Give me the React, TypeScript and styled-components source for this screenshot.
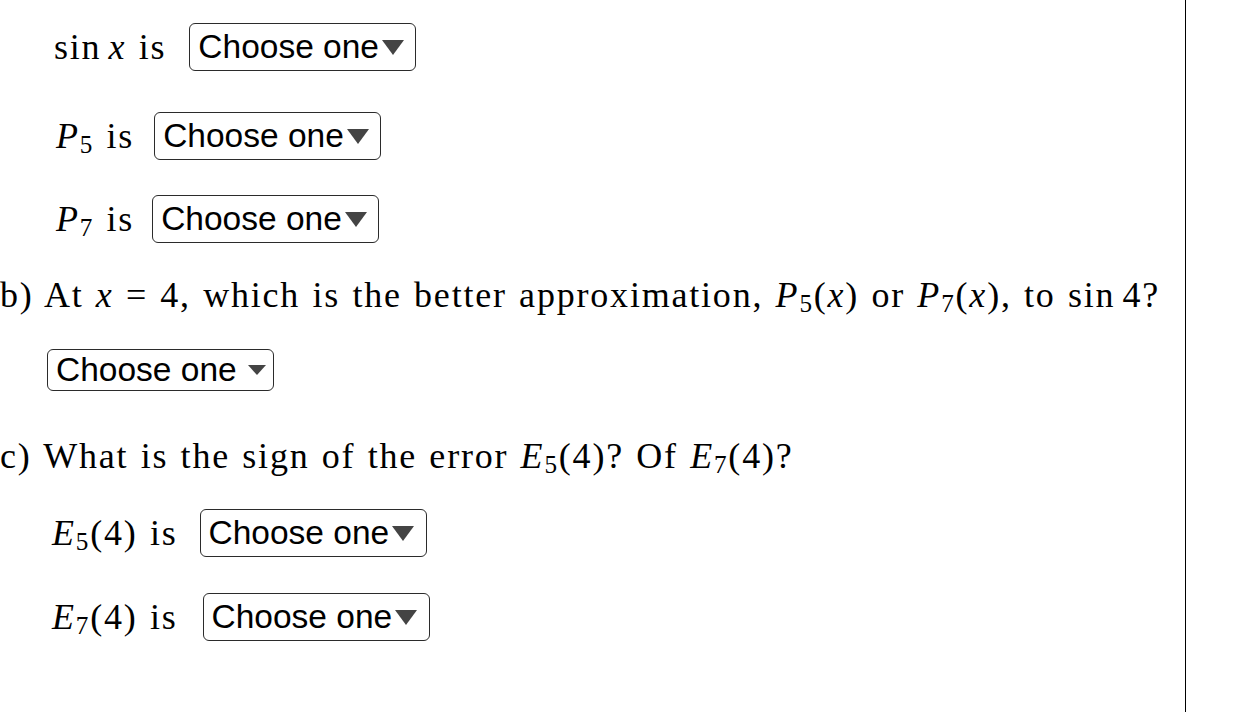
import React from "react";
import styled, { createGlobalStyle } from "styled-components";

const GlobalStyle = createGlobalStyle`
  html, body {
    margin: 0;
    padding: 0;
    background: #fff;
  }
  body {
    font-family: "Liberation Serif", "Times New Roman", serif;
    color: #000;
  }
`;

const Sheet = styled.div`
  width: 1185px;
  height: 712px;
  border-right: 1px solid #000;
  overflow: hidden;
`;

const Stack = styled.div`
  display: flex;
  flex-direction: column;
  padding-top: 23px;
`;

const AnswerRow = styled.div<{ $top: number; $indent: number }>`
  display: flex;
  align-items: center;
  height: 48px;
  margin-top: ${(p) => p.$top}px;
  padding-left: ${(p) => p.$indent}px;
`;

const mathText = `
  font-size: 36px;
  line-height: 44px;
  letter-spacing: 1.8px;
  word-spacing: 1.5px;
  white-space: pre;
`;

const Label = styled.span<{ $gap: number }>`
  ${mathText}
  margin-right: ${(p) => p.$gap}px;
`;

const Question = styled.div<{ $top: number }>`
  ${mathText}
  margin-top: ${(p) => p.$top}px;
`;

const Var = styled.i`
  font-style: italic;
`;

const Sub = styled.span`
  font-size: 0.7em;
  vertical-align: -0.2em;
  line-height: 0;
`;

const Fn = styled.span`
  margin-right: 0.2em;
`;

const Picker = styled.span<{ $compact?: boolean }>`
  display: inline-flex;
  align-items: center;
  box-sizing: border-box;
  height: ${(p) => (p.$compact ? 42 : 48)}px;
  width: 227px;
  padding-left: 8px;
  border: 1px solid #2b2b2b;
  border-radius: 6px;
  font-family: "Liberation Sans", Arial, sans-serif;
  font-size: 33.5px;
  color: #000;
`;

const PickerRow = styled.div<{ $top: number; $indent: number }>`
  display: flex;
  margin-top: ${(p) => p.$top}px;
  padding-left: ${(p) => p.$indent}px;
`;

const Caret = styled.span<{ $compact?: boolean }>`
  width: 0;
  height: 0;
  border-left: ${(p) => (p.$compact ? 9 : 11.5)}px solid transparent;
  border-right: ${(p) => (p.$compact ? 9 : 11.5)}px solid transparent;
  border-top: ${(p) => (p.$compact ? 10 : 15)}px solid #444;
  margin-left: ${(p) => (p.$compact ? 11 : 3)}px;
`;

const Choice = ({ compact }: { compact?: boolean }) => (
  <Picker $compact={compact}>
    Choose one
    <Caret $compact={compact} />
  </Picker>
);

export default function App() {
  return (
    <>
      <GlobalStyle />
      <Sheet>
        <Stack>
          <AnswerRow $top={0} $indent={54}>
            <Label $gap={23}>
              <Fn>sin</Fn>
              <Var>x</Var>
              {" is"}
            </Label>
            <Choice />
          </AnswerRow>
          <AnswerRow $top={41} $indent={56}>
            <Label $gap={20}>
              <Var>P</Var>
              <Sub>5</Sub>
              {" is"}
            </Label>
            <Choice />
          </AnswerRow>
          <AnswerRow $top={35} $indent={56}>
            <Label $gap={18}>
              <Var>P</Var>
              <Sub>7</Sub>
              {" is"}
            </Label>
            <Choice />
          </AnswerRow>
          <Question $top={30}>
            {"b) At "}
            <Var>x</Var>
            {" = 4, which is the better approximation, "}
            <Var>P</Var>
            <Sub>5</Sub>(<Var>x</Var>)
            {" or "}
            <Var>P</Var>
            <Sub>7</Sub>(<Var>x</Var>)
            {", to "}
            <Fn>sin</Fn>
            {"4?"}
          </Question>
          <PickerRow $top={32} $indent={47}>
            <Choice compact />
          </PickerRow>
          <Question $top={43}>
            {"c) What is the sign of the error "}
            <Var>E</Var>
            <Sub>5</Sub>
            {"(4)? Of "}
            <Var>E</Var>
            <Sub>7</Sub>
            {"(4)?"}
          </Question>
          <AnswerRow $top={31} $indent={52}>
            <Label $gap={22}>
              <Var>E</Var>
              <Sub>5</Sub>
              {"(4) is"}
            </Label>
            <Choice />
          </AnswerRow>
          <AnswerRow $top={36} $indent={52}>
            <Label $gap={25}>
              <Var>E</Var>
              <Sub>7</Sub>
              {"(4) is"}
            </Label>
            <Choice />
          </AnswerRow>
        </Stack>
      </Sheet>
    </>
  );
}
